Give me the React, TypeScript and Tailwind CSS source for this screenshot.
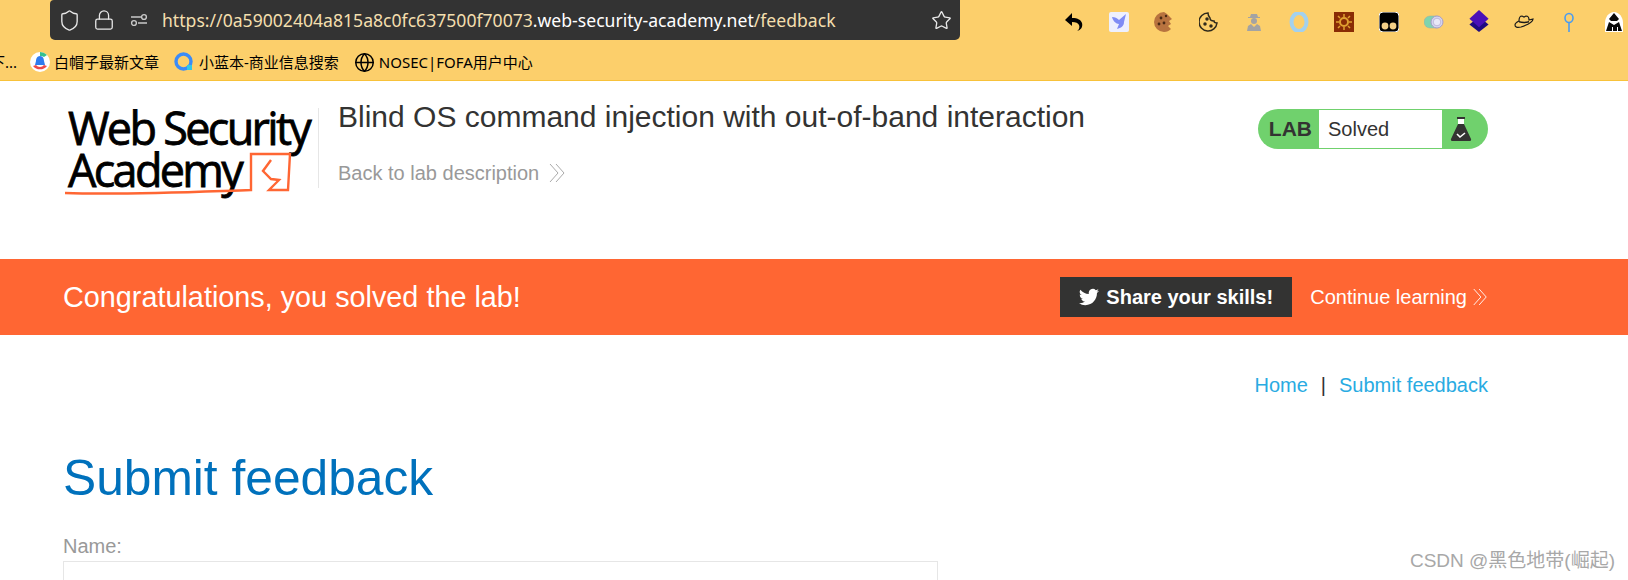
import { Globe, Lock, Shield, Star } from "lucide-react"

const sans = "font-['Liberation_Sans',Arial,'Noto_Sans_CJK_SC',sans-serif]"

function Chevrons({ className }: { className: string }) {
  return (
    <svg viewBox="0 0 18 20" fill="none" stroke="currentColor" strokeWidth="1" className={className}>
      <path d="M2 1l8 9-8 9M8 1l8 9-8 9" />
    </svg>
  )
}

function ToolbarIcons() {
  return (
    <div className="flex items-center gap-[25px] pr-[3px]">
      <svg viewBox="0 0 20 20" className="w-5 h-5">
        <path d="M8 1L1 8l7 6v-4c4 0 6 1 7 3 1 2 0 5-2 6 4-1 6-4 5-8-1-3-4-5-10-5z" fill="#000" />
      </svg>
      <svg viewBox="0 0 20 20" className="w-5 h-5">
        <rect width="20" height="20" rx="2" fill="#eef0fe" />
        <path d="M3 5c3 0 5 1 7 3l7-6-2 8c0 4-3 6-7 7l2-5C7 12 4 9 3 5z" fill="#7f8cf5" />
      </svg>
      <svg viewBox="0 0 20 20" className="w-5 h-5">
        <path d="M10 0a10 10 0 100 20c3 0 5-1 7-3l-3-3 3-2-2-3 3-2-3-3-2-2-3-2z" fill="#b8733f" />
        <circle cx="7" cy="6" r="1.4" fill="#4a2a14" />
        <circle cx="12" cy="4" r="1.2" fill="#4a2a14" />
        <circle cx="5" cy="12" r="1.4" fill="#4a2a14" />
        <circle cx="10" cy="11" r="1.4" fill="#4a2a14" />
      </svg>
      <svg viewBox="0 0 20 20" className="w-5 h-5" fill="none" stroke="#2f2a1c" strokeWidth="1.5">
        <path d="M9 1a9 9 0 109 10c-2 0-3-1-3-2-2 0-4-1-4-3-1-1-2-3-2-5z" />
        <circle cx="8" cy="7" r="1" fill="#2f2a1c" />
        <circle cx="6" cy="12" r="1" fill="#2f2a1c" />
        <circle cx="12" cy="14" r="1" fill="#2f2a1c" />
      </svg>
      <svg viewBox="0 0 20 20" className="w-5 h-5">
        <path d="M6 5l1-3h6l1 3h2v1H4V5z" fill="#a3a3a3" />
        <circle cx="10" cy="9" r="3" fill="#a3a3a3" />
        <path d="M3 19l1-5 3-2 3 3 3-3 3 2 1 5z" fill="#a3a3a3" />
      </svg>
      <svg viewBox="0 0 20 20" className="w-5 h-5" fill="none">
        <ellipse cx="10" cy="10" rx="7.5" ry="9" stroke="#a3d1ee" strokeWidth="4" />
      </svg>
      <svg viewBox="0 0 20 20" className="w-5 h-5">
        <rect width="20" height="20" fill="#8a2c05" />
        <circle cx="10" cy="10" r="4" fill="none" stroke="#e0a030" strokeWidth="2" />
        <path d="M10 2v3M10 15v3M2 10h3M15 10h3M4 4l2 2M14 14l2 2M16 4l-2 2M6 14l-2 2" stroke="#e0a030" strokeWidth="1.5" />
      </svg>
      <svg viewBox="0 0 20 20" className="w-5 h-5">
        <rect width="20" height="20" rx="4" fill="#000" stroke="#fff" />
        <circle cx="6" cy="14" r="3.4" fill="#f3cf87" />
        <circle cx="14" cy="14" r="3.4" fill="#f3cf87" />
      </svg>
      <svg viewBox="0 0 20 20" className="w-5 h-5">
        <rect y="4" width="18" height="12" rx="6" fill="#7fd4ae" stroke="#9aa" strokeWidth="0.5" />
        <circle cx="13" cy="10" r="6" fill="#d5d6ef" stroke="#a79cc9" />
        <circle cx="13" cy="10" r="3.8" fill="#e8e8f7" stroke="#a79cc9" strokeWidth="0.6" />
      </svg>
      <svg viewBox="0 0 20 24" className="w-5 h-[23px]">
        <path d="M10 7l10 8-10 8-10-8z" fill="#1f0a80" />
        <path d="M10 0l10 9-10 9L0 9z" fill="#4a10b8" />
      </svg>
      <svg viewBox="0 0 20 20" className="w-5 h-5">
        <path d="M5 9c0-4 1-5 3-5l2 1 2-1c2 0 3 2 3 4l4-1c0 3-6 6-12 8-4 1-6 0-6-2s2-3 4-4z" fill="none" stroke="#1a1a1a" strokeWidth="1.2" />
        <path d="M5 9c3 1 7 1 10 0v1.500c-3 1-7 1-10 0z" fill="#1a1a1a" />
      </svg>
      <svg viewBox="0 0 20 20" className="w-5 h-5" fill="none" stroke="#4a9cf0" strokeWidth="1.6">
        <ellipse cx="10" cy="6" rx="4" ry="4.500" />
        <path d="M10 10.500V20" />
      </svg>
      <svg viewBox="0 0 20 20" className="w-5 h-5">
        <path d="M10 0c5 0 9 5 9 11v9H1v-9C1 5 5 0 10 0z" fill="#fff" />
        <path d="M10 1l5 6-2 2H7L5 7zM5 10l5 3 5-3 3 9h-4v-4h-1v4H9v-4H8v4H2z" fill="#0a0a0a" />
      </svg>
    </div>
  )
}

function BrowserChrome() {
  return (
    <div className={`h-[81px] bg-[#fccf6b] border-b border-[#f8c23a] flex flex-col ${sans}`}>
      <div className="flex items-start justify-between pl-[50px] pr-[1px] h-[51px]">
        <div className="w-[910px] h-[40px] bg-[#333333] rounded-b-[5px] rounded-tl-[4px] flex items-center pl-[8px] pr-[8px] font-['Noto_Sans',sans-serif] text-[17.6px]">
          <Shield className="w-[23px] h-[23px] text-[#e8e8e8]" strokeWidth={1.4} />
          <Lock className="w-[22px] h-[22px] text-[#e8e8e8] ml-[12px]" strokeWidth={1.4} />
          <svg viewBox="0 0 18 14" fill="none" stroke="#c9c9c9" strokeWidth="1.4" className="w-[18px] h-[14px] ml-[15px]">
            <path d="M1 4h10M17 10H8" />
            <circle cx="14" cy="4" r="2.400" />
            <circle cx="4" cy="10" r="2.400" />
          </svg>
          <span className="ml-[14px] flex-1 truncate text-[#f3dfae]">
            https://0a59002404a815a8c0fc637500f70073<span className="text-white">.web-security-academy.net</span>/feedback
          </span>
          <Star className="w-[21px] h-[21px] text-[#e8e8e8]" strokeWidth={1.5} />
        </div>
        <div className="pt-[10px]">
          <ToolbarIcons />
        </div>
      </div>
      <div className="flex items-center h-[22px] text-[15px] text-black font-['Noto_Sans','Noto_Sans_CJK_SC',sans-serif]">
        <span className="-ml-[10px] w-[25px] whitespace-nowrap">下...</span>
        <svg viewBox="0 0 20 20" className="w-5 h-5 ml-[15px]">
          <circle cx="10" cy="10" r="10" fill="#fff" />
          <path d="M10 0a10 10 0 017 3l-3 2a6 6 0 00-4-1z" fill="#35c08e" />
          <path d="M3 14l3-1a5 5 0 008 0l3 1a9 9 0 01-14 0z" fill="#ec4a4a" />
          <path d="M10 4c3 0 4 3 4 5l1 4H5l1-4c0-2 1-5 4-5z" fill="#2f7cf0" />
        </svg>
        <span className="ml-[4px]">白帽子最新文章</span>
        <svg viewBox="0 0 20 20" className="w-5 h-5 ml-[15px]" fill="none">
          <circle cx="9.500" cy="9.500" r="7.500" stroke="#3b8bf7" strokeWidth="3.400" />
          <rect x="13" y="13" width="5" height="5" fill="#30c8e8" />
        </svg>
        <span className="ml-[5px]">小蓝本-商业信息搜索</span>
        <Globe className="w-[21px] h-[21px] ml-[15px]" strokeWidth={1.7} />
        <span className="ml-[4px]">NOSEC|FOFA用户中心</span>
      </div>
    </div>
  )
}

function Logo() {
  return (
    <div className="relative w-[256px] h-[80px] border-r border-[#e6e6e6] font-['Open_Sans',sans-serif] text-black">
      <div className="pl-[5px] -mt-[1px] text-[45px] leading-[42px] tracking-[-2.7px] font-normal whitespace-nowrap [-webkit-text-stroke:0.8px_black]">
        Web Security
        <br />
        Academy
      </div>
      <svg viewBox="0 0 240 100" fill="none" stroke="#ff6633" strokeWidth="2.4" className="absolute left-0 top-0 w-[240px] h-[100px]">
        <path d="M2 85c60 2 125-1 186-3V46h39l-2 36h-19l10-10-8-1-8-8 8-11" />
      </svg>
    </div>
  )
}

function Header() {
  return (
    <div className={`h-[178px] flex items-start pl-[63px] pr-[140px] pt-[27px] ${sans}`}>
      <Logo />
      <div className="ml-[19px] flex-1 -mt-[9px]">
        <h2 className="text-[30px] leading-[36px] text-[#333332]">Blind OS command injection with out-of-band interaction</h2>
        <div className="mt-[26px] flex items-center text-[20px] leading-[24px] text-[#999999]">
          Back to lab description
          <Chevrons className="w-[18px] h-[20px] ml-[9px] text-[#aaaaaa]" />
        </div>
      </div>
      <div className="flex items-stretch w-[230px] h-[40px] rounded-[20px] bg-[#70d16d] mt-[1px] overflow-hidden">
        <div className="w-[61px] flex items-center justify-end pr-[7px] text-[21px] font-bold text-[#333332]">LAB</div>
        <div className="w-[123px] my-[1px] bg-white pl-[9px] flex items-center text-[20px] text-[#333332]">Solved</div>
        <div className="flex-1 flex items-center pl-[8px]">
          <svg viewBox="0 0 22 26" className="w-[22px] h-[26px]">
            <rect x="7" y="1" width="8" height="2" fill="#333332" />
            <path d="M8 3h6v6H8z" fill="#fff" />
            <path d="M8 8h6l7 15c.4 1-.2 2-1 2H2c-.8 0-1.400-1-1-2z" fill="#333332" />
            <path d="M7 18l3 3 5-4" fill="none" stroke="#fff" strokeWidth="1.600" />
          </svg>
        </div>
      </div>
    </div>
  )
}

function Banner() {
  return (
    <div className={`h-[76px] bg-[#ff6633] flex items-center justify-between pl-[63px] pr-[140px] text-white ${sans}`}>
      <div className="text-[28.8px] pt-[1px]">Congratulations, you solved the lab!</div>
      <div className="flex items-center">
        <button className="w-[232px] h-[40px] bg-[#333332] flex items-center justify-center gap-[7px] text-[20px] font-bold">
          <svg viewBox="0 0 24 24" fill="#fff" className="w-[20px] h-[20px]">
            <path d="M23.95 4.57a10 10 0 01-2.82.77 4.96 4.96 0 002.16-2.72c-.95.55-2 .96-3.12 1.19a4.92 4.92 0 00-8.38 4.48A13.98 13.98 0 011.67 3.15a4.93 4.93 0 001.52 6.57 4.9 4.9 0 01-2.23-.61v.06a4.92 4.92 0 003.95 4.83 4.9 4.9 0 01-2.22.08 4.94 4.94 0 004.6 3.42A9.87 9.87 0 010 19.54a13.94 13.94 0 007.55 2.21c9.05 0 14-7.5 14-13.98 0-.21 0-.42-.02-.63a9.94 9.94 0 002.46-2.55z" />
          </svg>
          Share your skills!
        </button>
        <div className="ml-[18px] flex items-center text-[20px]">
          Continue learning
          <Chevrons className="w-[16px] h-[18px] ml-[5px]" />
        </div>
      </div>
    </div>
  )
}

export default function App() {
  return (
    <div className="w-[1628px] h-[580px] overflow-hidden relative bg-white">
      <BrowserChrome />
      <Header />
      <Banner />
      <div className={`pl-[63px] pr-[140px] ${sans}`}>
        <div className="flex justify-end pt-[38px] text-[20px] leading-[24px] text-[#29abe2]">
          Home<span className="mx-[13px] text-[#333332]">|</span>Submit feedback
        </div>
        <h1 className="mt-[51px] text-[49.7px] leading-[60px] text-[#0071bc]">Submit feedback</h1>
        <label className="block mt-[27px] text-[20px] leading-[22px] text-[#999999]">Name:</label>
        <div className="mt-[4px] w-[875px] h-[40px] border border-[#e6e6e6]" />
      </div>
      <div className="absolute right-[13px] bottom-[8px] text-[19px] leading-[22px] text-[#a8a8a8] font-['Liberation_Sans','Noto_Sans_CJK_SC',sans-serif]">
        CSDN @黑色地带(崛起)
      </div>
    </div>
  )
}
